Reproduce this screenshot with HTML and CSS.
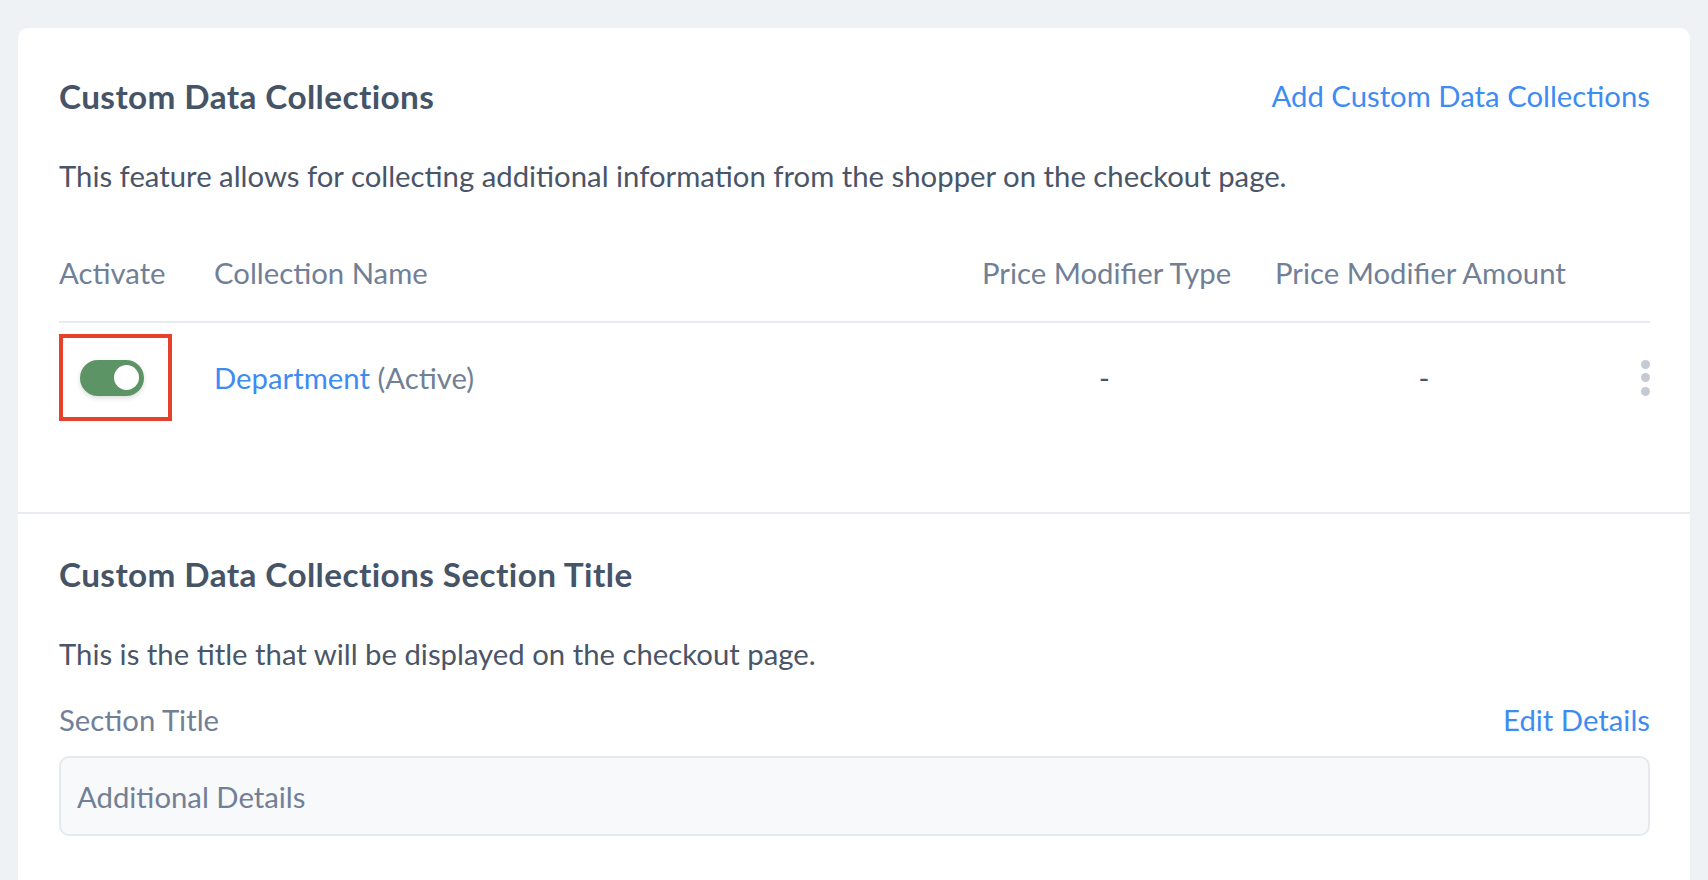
FILE: index.html
```html
<!doctype html>
<html>
<head>
<meta charset="utf-8">
<title>Custom Data Collections</title>
<link rel="stylesheet" href="styles.css">
</head>
	<body>
		<div class="card">
			<section class="block">
				<div class="block-head">
					<h2 class="block-title">Custom Data Collections</h2>
					<a href="#" class="link">Add Custom Data Collections</a>
				</div>
				<p class="block-desc">This feature allows for collecting additional information from the shopper on the checkout page.</p>

				<div class="grid grid-head">
					<div>Activate</div>
					<div>Collection Name</div>
					<div>Price Modifier Type</div>
					<div>Price Modifier Amount</div>
					<div></div>
				</div>
				<div class="grid grid-row">
					<div class="cell-toggle"><span class="toggle on"></span></div>
					<div><a href="#" class="link">Department</a> <span class="muted">(Active)</span></div>
					<div class="cell-dash type">-</div>
					<div class="cell-dash">-</div>
					<div class="cell-more">
						<span class="dots"><i></i><i></i><i></i></span>
					</div>
				</div>
			</section>

			<section class="block">
				<h2 class="block-title">Custom Data Collections Section Title</h2>
				<p class="block-desc">This is the title that will be displayed on the checkout page.</p>
				<div class="field-head">
					<span>Section Title</span>
					<a href="#" class="link">Edit Details</a>
				</div>
				<div class="field">Additional Details</div>
			</section>
		</div>
	</body>
</html>
```

FILE: styles.css
```css
* {
	box-sizing: border-box;
}
html, body {
	height: 100%;
}
body {
	margin: 0;
	padding: 28px 18px 0;
	background: #eff2f5;
	font-family: Lato, "Liberation Sans", sans-serif;
	font-size: 29.3px;
	color: #4a5568;
	overflow: hidden;
}
.card {
	height: 100%;
	background: #fff;
	border-radius: 10px 10px 0 0;
}
.block {
	padding: 48px 40px 91px 41px;
	border-bottom: 2px solid #e8ebef;
}
.block + .block {
	padding-top: 40px;
	padding-bottom: 0;
	border-bottom: none;
}
.block-head {
	display: flex;
	justify-content: space-between;
	align-items: center;
	line-height: 40px;
}
.block-title {
	margin: 0;
	font-size: 33.3px;
	font-weight: 700;
	letter-spacing: .4px;
	line-height: 40px;
	color: #465468;
}
.link {
	color: #3e8cf2;
	text-decoration: none;
}
.muted {
	color: #718096;
}
.block-desc {
	margin: 40px 0 0;
	line-height: 40px;
}

/* table */
.grid {
	display: grid;
	grid-template-columns: 155px 1fr 293px 298px 77px;
	line-height: 40px;
}
.grid-head {
	margin-top: 57px;
	padding-bottom: 28px;
	border-bottom: 2px solid #e8ecf0;
	color: #718096;
}
.grid-row {
	margin-top: 11px;
	align-items: center;
}
.cell-toggle {
	display: flex;
	align-items: center;
	width: 113px;
	height: 87px;
	padding-left: 17px;
	border: 4px solid #e5412b;
}
.toggle {
	position: relative;
	width: 64px;
	height: 36px;
	border-radius: 18px;
	background: #ccd2da;
	box-shadow: 0 2px 5px rgba(0,0,0,.15);
}
.toggle.on {
	background: #5d9465;
}
.toggle::after {
	content: '';
	position: absolute;
	top: 5.5px;
	left: 5.5px;
	width: 25px;
	height: 25px;
	border-radius: 50%;
	background: #fff;
}
.toggle.on::after {
	left: auto;
	right: 5.5px;
}
.cell-dash {
	text-align: center;
}
.cell-dash.type {
	padding-right: 48px;
}
.cell-more {
	justify-self: end;
}
.dots {
	display: flex;
	flex-direction: column;
	gap: 4.5px;
}
.dots i {
	width: 9px;
	height: 9px;
	border-radius: 50%;
	background: #c4cbd5;
}

/* section title field */
.field-head {
	display: flex;
	justify-content: space-between;
	margin-top: 26px;
	line-height: 40px;
	color: #718096;
}
.field {
	display: flex;
	align-items: center;
	height: 80px;
	margin-top: 16px;
	padding: 0 16px;
	border: 2px solid #e6eaee;
	border-radius: 10px;
	background: #f8f9fb;
	color: #718096;
}
```
